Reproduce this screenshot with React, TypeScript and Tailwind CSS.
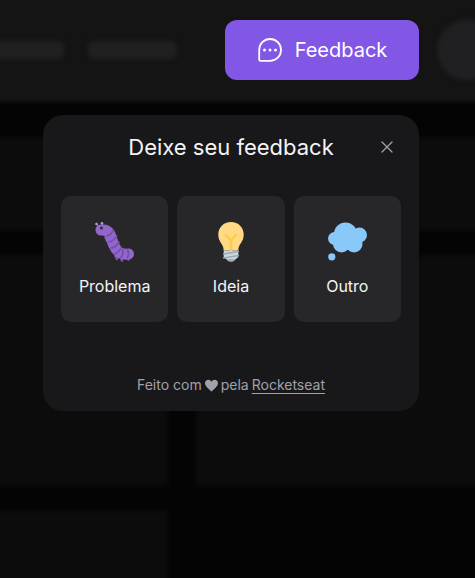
import { X } from "lucide-react";
import type { ReactNode } from "react";

function ChatIcon() {
  return (
    <svg width="26" height="26" viewBox="0 0 26 26" fill="none" aria-hidden="true">
      <path
        d="M2.2 22.4V12.9a10.9 10.9 0 1 1 10.9 10.9H3.6a1.4 1.4 0 0 1-1.4-1.4Z"
        stroke="currentColor"
        strokeWidth="1.8"
        strokeLinejoin="round"
      />
      <circle cx="7.5" cy="13" r="1.5" fill="currentColor" />
      <circle cx="13" cy="13" r="1.5" fill="currentColor" />
      <circle cx="18.5" cy="13" r="1.5" fill="currentColor" />
    </svg>
  );
}

function BugIcon() {
  return (
    <svg width="40" height="40" viewBox="0 0 40 40" fill="none" aria-hidden="true">
      <path d="M3.500 5 1.500 1.500M7.500 4 7 1" stroke="#a06cd5" strokeWidth="1.200" strokeLinecap="round" />
      <circle cx="1.500" cy="2" r="1.300" fill="#b794e6" />
      <circle cx="7" cy="1.300" r="1.300" fill="#b794e6" />
      <path
        d="M10.500 15 12 19M13.500 21 15 25M20.500 34 22 37M25.500 35 27 38.500M32.500 34 33.500 37.500"
        stroke="#8255b8"
        strokeWidth="2.400"
        strokeLinecap="round"
      />
      <path
        d="M6 8C16.500 6.800 15.500 16.300 19 23.300 22 30.300 26.500 33 33.500 32"
        stroke="#9266cc"
        strokeWidth="11"
        strokeLinecap="round"
      />
      <path
        d="M11.500 14Q16.500 13 18 8M14 20Q19.500 18.500 21.500 14M16 26Q21.500 25 24 20M19.500 32Q24.500 30 26 25.500M26 35.500Q29 32 27.500 27.500M32.500 35.500Q34.500 31.500 32.500 28"
        stroke="#7450a8"
        strokeWidth="1.700"
        strokeLinecap="round"
      />
      <circle cx="6.500" cy="6" r="1.500" fill="#292f33" />
    </svg>
  );
}

function BulbIcon() {
  return (
    <svg width="40" height="40" viewBox="0 0 40 40" fill="none" aria-hidden="true">
      <path
        d="M20 0C12.500 0 7.300 5.500 7.300 12.500c0 8 5.400 9 5.400 16h14.600c0-7 5.400-8 5.400-16C32.700 5.500 27.500 0 20 0Z"
        fill="#ffd983"
      />
      <path
        d="M15 13 20 18.500 25 13M20 18.500V28"
        stroke="#ffcc4d"
        strokeWidth="2.600"
        strokeLinecap="round"
        strokeLinejoin="round"
      />
      <path d="M12.700 28.500h14.600v6.500l-3 2.500c-1 1.500-2.500 2-4.300 2s-3.300-.500-4.300-2l-3-2.500Z" fill="#ccd6dd" />
      <path d="M12.500 32 27.500 29.500M12.500 36 27.500 33.500" stroke="#99aab5" strokeWidth="1.300" strokeLinecap="round" />
      <path d="M15.500 37.300h9c-1 1.700-2.500 2.300-4.500 2.300s-3.500-.600-4.500-2.300Z" fill="#99aab5" />
    </svg>
  );
}

function ThoughtIcon() {
  return (
    <svg width="40" height="40" viewBox="0 0 40 40" fill="#88c9f9" aria-hidden="true">
      <circle cx="18.500" cy="12" r="11.500" />
      <circle cx="32.500" cy="13" r="7.500" />
      <circle cx="7.500" cy="16.500" r="6.500" />
      <circle cx="14.500" cy="22" r="8.500" />
      <circle cx="27" cy="22" r="8.500" />
      <path d="M10 12H32V26H12Z" />
      <circle cx="4.800" cy="34.800" r="3.600" />
    </svg>
  );
}

function Option({ label, children }: { label: string; children: ReactNode }) {
  return (
    <button
      type="button"
      className="flex h-[126px] min-w-0 flex-1 flex-col items-center gap-3 rounded-[10px] bg-[#27272a] pt-[26px]"
    >
      {children}
      <span className="text-[16px] leading-6 text-[#f4f4f5]">{label}</span>
    </button>
  );
}

export default function App() {
  return (
    <div className="relative flex h-screen flex-col overflow-hidden bg-[#040404] font-['Inter',sans-serif]">
      <header className="relative flex h-[102px] shrink-0 items-center justify-end pb-[2px]">
        <div className="absolute -inset-x-2 -top-2 bottom-0 bg-[#141415] blur-[2px]" />
        <div className="relative mr-6 h-[18px] w-[110px] shrink-0 rounded-md bg-[#202022] blur-[2px]" />
        <div className="relative mr-12 h-[18px] w-[89px] shrink-0 rounded-md bg-[#202022] blur-[2px]" />
        <button
          type="button"
          className="relative flex h-[60px] w-[194px] shrink-0 items-center justify-center gap-3 rounded-xl bg-[#8257e5] text-[20px] leading-6 text-white"
        >
          <ChatIcon />
          Feedback
        </button>
        <div className="relative -mr-[22px] ml-[18px] size-[60px] shrink-0 rounded-full bg-[#202022] blur-[2px]" />
      </header>

      <main className="mt-[35px] grid flex-1 grid-cols-[168px_1fr] grid-rows-[94px_231px_1fr] gap-x-7 gap-y-6 blur-[2px]">
        <div className="-ml-2 bg-[#0c0c0c]" />
        <div className="-mr-2 bg-[#0c0c0c]" />
        <div className="-ml-2 bg-[#0c0c0c]" />
        <div className="-mr-2 bg-[#0c0c0c]" />
        <div className="-mb-2 -ml-2 bg-[#0c0c0c]" />
      </main>

      <section
        role="dialog"
        aria-labelledby="feedback-title"
        className="absolute top-[115px] right-14 flex w-[376px] flex-col rounded-[20px] bg-[#18181b] px-[18px] pb-4"
      >
        <div className="relative flex h-[81px] items-start justify-center pt-4">
          <h1 id="feedback-title" className="text-[22px] leading-8 text-[#f4f4f5]">
            Deixe seu feedback
          </h1>
          <button type="button" aria-label="Fechar" className="absolute top-[22px] right-1 text-[#a1a1aa]">
            <X size={20} strokeWidth={1.5} />
          </button>
        </div>
        <div className="flex gap-[9px]">
          <Option label="Problema">
            <BugIcon />
          </Option>
          <Option label="Ideia">
            <BulbIcon />
          </Option>
          <Option label="Outro">
            <ThoughtIcon />
          </Option>
        </div>
        <footer className="mt-[53px] flex items-center justify-center gap-[3px] text-[14px] leading-5 text-[#a1a1aa]">
          <span>Feito com</span>
          <svg width="13" height="13" viewBox="0 0 14 14" fill="currentColor" aria-label="amor">
            <path d="M7 13.500C4.500 11 0 8 0 4.300 0 2.200 1.600.700 3.600.700 5.100.700 6.400 1.600 7 3c.600-1.400 1.900-2.300 3.400-2.300 2 0 3.600 1.500 3.600 3.600C14 8 9.500 11 7 13.500Z" />
          </svg>
          <span>pela</span>
          <a href="#rocketseat" className="underline underline-offset-3">
            Rocketseat
          </a>
        </footer>
      </section>
    </div>
  );
}
